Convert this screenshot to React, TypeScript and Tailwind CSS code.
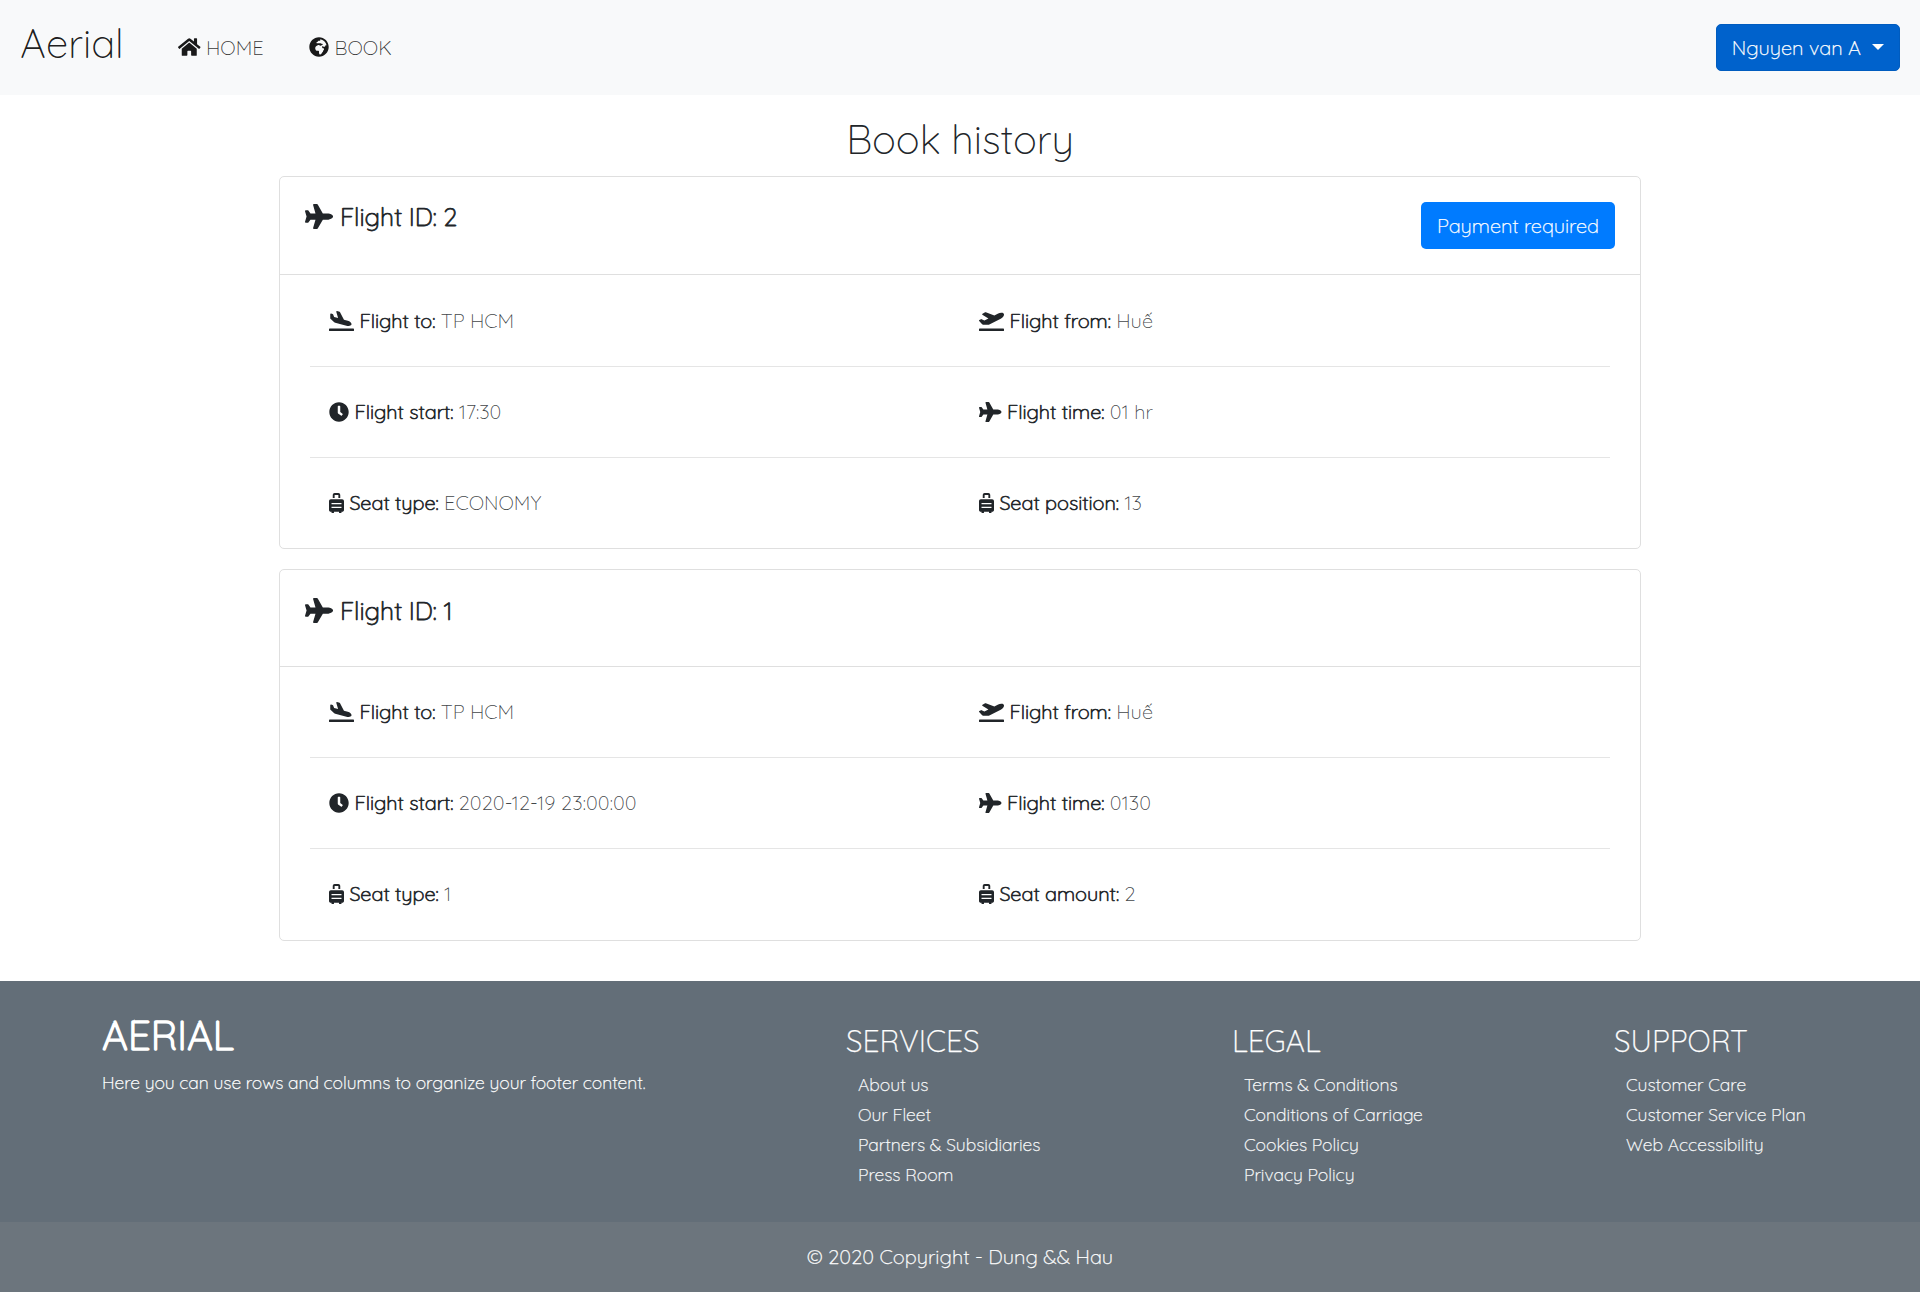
import type { ReactNode } from "react";
import type { IconType } from "react-icons";
import {
  FaClock,
  FaGlobeAfrica,
  FaHome,
  FaPlane,
  FaPlaneArrival,
  FaPlaneDeparture,
  FaSuitcaseRolling,
} from "react-icons/fa";

type Detail = { icon: IconType; size: string; label: string; value: string };
type Flight = {
  id: number;
  paymentRequired: boolean;
  headerClass: string;
  bodyClass: string;
  rows: [Detail, Detail][];
};

const WIDE = "h-5 w-[25px]";
const PLANE = "h-5 w-[22.5px]";
const ROUND = "h-5 w-5";
const CASE = "h-5 w-[15px]";

const flights: Flight[] = [
  {
    id: 2,
    paymentRequired: true,
    headerClass: "h-[98px] pt-[25px]",
    bodyClass: "pt-px -mb-px",
    rows: [
      [
        { icon: FaPlaneArrival, size: WIDE, label: "Flight to:", value: "TP HCM" },
        { icon: FaPlaneDeparture, size: WIDE, label: "Flight from:", value: "Huế" },
      ],
      [
        { icon: FaClock, size: ROUND, label: "Flight start:", value: "17:30" },
        { icon: FaPlane, size: PLANE, label: "Flight time:", value: "01 hr" },
      ],
      [
        { icon: FaSuitcaseRolling, size: CASE, label: "Seat type:", value: "ECONOMY" },
        { icon: FaSuitcaseRolling, size: CASE, label: "Seat position:", value: "13" },
      ],
    ],
  },
  {
    id: 1,
    paymentRequired: false,
    headerClass: "h-[97px] pt-[26px]",
    bodyClass: "",
    rows: [
      [
        { icon: FaPlaneArrival, size: WIDE, label: "Flight to:", value: "TP HCM" },
        { icon: FaPlaneDeparture, size: WIDE, label: "Flight from:", value: "Huế" },
      ],
      [
        { icon: FaClock, size: ROUND, label: "Flight start:", value: "2020-12-19 23:00:00" },
        { icon: FaPlane, size: PLANE, label: "Flight time:", value: "0130" },
      ],
      [
        { icon: FaSuitcaseRolling, size: CASE, label: "Seat type:", value: "1" },
        { icon: FaSuitcaseRolling, size: CASE, label: "Seat amount:", value: "2" },
      ],
    ],
  },
];

function NavLink({ icon, children }: { icon: ReactNode; children: ReactNode }) {
  return (
    <a href="#" className="leading-[30px] whitespace-nowrap text-black/90">
      {icon} <span className="text-black/80">{children}</span>
    </a>
  );
}

function Navbar() {
  return (
    <nav className="flex h-[95px] items-center bg-[#f8f9fa] px-5">
      <a href="#" className="-mt-2.5 w-[158px] text-[40px] leading-[60px] text-black/90">
        Aerial
      </a>
      <div className="flex">
        <div className="w-[131px]">
          <NavLink icon={<FaHome className="inline h-5 w-[22.5px] align-[-2.5px]" />}>HOME</NavLink>
        </div>
        <NavLink icon={<FaGlobeAfrica className="inline h-5 w-5 align-[-2.5px]" />}>BOOK</NavLink>
      </div>
      <button className="ml-auto h-[47px] rounded-[5px] border border-[#005cbf] bg-[#0062cc] px-[15px] leading-[30px] text-white [-webkit-text-stroke:0.25px_currentColor]">
        Nguyen van A
        <span className="ml-[11px] inline-block border-x-6 border-t-6 border-x-transparent border-t-white align-[5px]" />
      </button>
    </nav>
  );
}

function DetailCell({ detail }: { detail: Detail }) {
  const Icon = detail.icon;
  return (
    <div className="w-1/2 px-[19px] leading-[30px]">
      <Icon className={`inline align-[-2.5px] ${detail.size}`} />{" "}
      <span className="tracking-[-0.05px] [-webkit-text-stroke:0.65px_currentColor]">{detail.label}</span>{" "}
      <span className={detail.value.length > 10 ? "tracking-[0.12px] text-[#212529]/85" : "text-[#212529]/85"}>
        {detail.value}
      </span>
    </div>
  );
}

function FlightCard({ flight }: { flight: Flight }) {
  return (
    <section className="rounded-[5px] border border-[#dfdfdf] bg-white text-[#212529]">
      <header
        className={`flex items-start justify-between border-b border-[#dfdfdf] px-[25px] ${flight.headerClass}`}
      >
        <h5 className="text-[25px] leading-[30px]">
          <FaPlane className="inline h-[25px] w-[28.125px] align-[-3px]" />{" "}
          <span className="[-webkit-text-stroke:0.75px_currentColor]">Flight ID: {flight.id}</span>
        </h5>
        {flight.paymentRequired && (
          <button className="h-[47px] rounded-[5px] bg-[#007bff] px-4 leading-[30px] tracking-[-0.05px] text-white [-webkit-text-stroke:0.25px_currentColor]">
            Payment required
          </button>
        )}
      </header>
      <div className={`divide-y divide-[#e5e5e5] px-[30px] ${flight.bodyClass}`}>
        {flight.rows.map((row) => (
          <div key={row[0].label} className="flex h-[91px] pt-[30px]">
            <DetailCell detail={row[0]} />
            <DetailCell detail={row[1]} />
          </div>
        ))}
      </div>
    </section>
  );
}

function FooterColumn({ title, links, className }: { title: string; links: string[]; className: string }) {
  return (
    <div className={`pt-3 ${className}`}>
      <h4 className="mb-2.5 text-[30px] leading-9">{title}</h4>
      <ul className="pl-3 text-[17.5px] leading-[30px]">
        {links.map((link) => (
          <li key={link}>
            <a href="#" className="text-[#f8f9fa]">
              {link}
            </a>
          </li>
        ))}
      </ul>
    </div>
  );
}

function Footer() {
  return (
    <footer className="text-white [-webkit-text-stroke:0.25px_currentColor]">
      <div className="flex h-[241px] bg-[#636e78] pt-[30px] pl-[102px] whitespace-nowrap">
        <div className="w-[744px]">
          <h2 className="mb-2.5 text-[40px] leading-[48px] [-webkit-text-stroke:1.6px_currentColor]">AERIAL</h2>
          <p className="text-[17.5px] leading-[27px] tracking-[-0.03px]">
            Here you can use rows and columns to organize your footer content.
          </p>
        </div>
        <FooterColumn
          className="w-[386px]"
          title="SERVICES"
          links={["About us", "Our Fleet", "Partners & Subsidiaries", "Press Room"]}
        />
        <FooterColumn
          className="w-[382px]"
          title="LEGAL"
          links={["Terms & Conditions", "Conditions of Carriage", "Cookies Policy", "Privacy Policy"]}
        />
        <FooterColumn
          className="w-[200px]"
          title="SUPPORT"
          links={["Customer Care", "Customer Service Plan", "Web Accessibility"]}
        />
      </div>
      <div className="h-[70px] bg-[#6c757d] py-5 text-center leading-[30px] tracking-[0.04px]">
        © 2020 Copyright - Dung &amp;&amp; Hau
      </div>
    </footer>
  );
}

export default function App() {
  return (
    <div className="bg-white font-['Quicksand','Open_Sans',sans-serif] text-[20px] leading-[30px] font-light">
      <Navbar />
      <main className="mx-auto w-[1362px] pt-5 pb-10">
        <h2 className="mb-[13px] text-center text-[40px] leading-[48px] tracking-[-0.05px] text-[#212529]">
          Book history
        </h2>
        <div className="flex flex-col gap-5">
          {flights.map((flight) => (
            <FlightCard key={flight.id} flight={flight} />
          ))}
        </div>
      </main>
      <Footer />
    </div>
  );
}
